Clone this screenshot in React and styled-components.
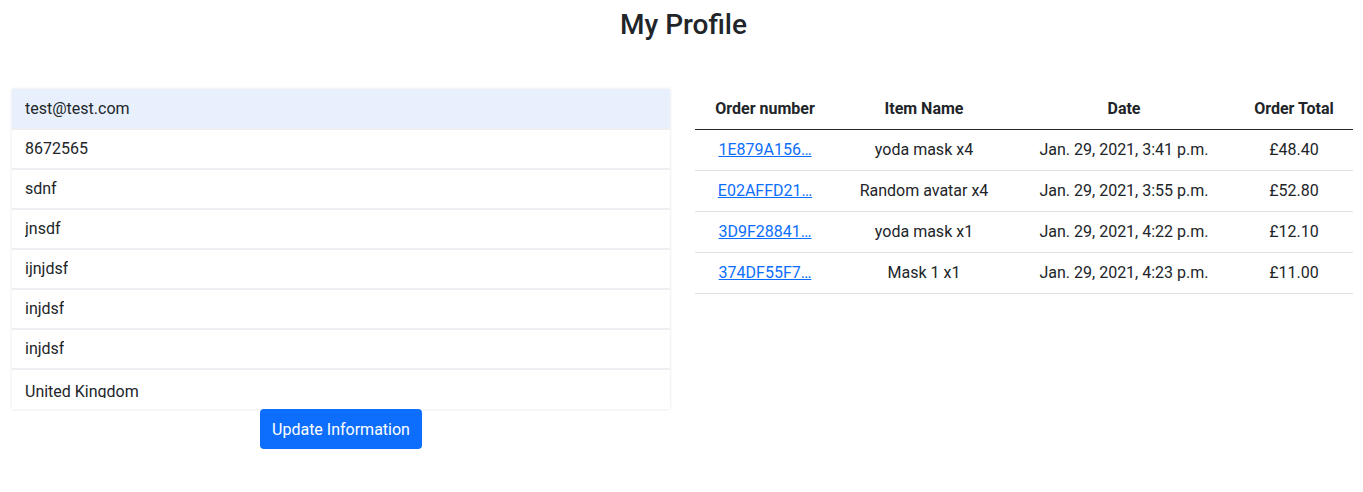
import React from 'react'
import styled, { createGlobalStyle } from 'styled-components'

const GlobalStyle = createGlobalStyle`
  body {
    margin: 0;
    background: #fff;
    color: #212529;
    font-family: Roboto, "Liberation Sans", sans-serif;
    font-size: 16px;
    line-height: 1.5;
  }
`

const Page = styled.div`
  width: 1363px;
`

const Title = styled.h3`
  margin: 0;
  padding: 8px 0 0 4px;
  text-align: center;
  font-size: 28px;
  font-weight: 500;
  line-height: 1.2;
  height: 89px;
  box-sizing: border-box;
`

const Columns = styled.div`
  display: grid;
  grid-template-columns: minmax(0, 1fr) minmax(0, 1fr);
  gap: 25px;
  padding: 0 10px 0 12px;
`

const LeftCol = styled.div`
  display: flex;
  flex-direction: column;
  align-items: center;
`

const Panel = styled.div`
  width: 100%;
  box-shadow: 0 0 3px rgba(0, 0, 0, 0.12);
  background: #fff;
`

const Field = styled.div`
  height: 40px;
  box-sizing: border-box;
  display: flex;
  align-items: ${({ $clipped }) => ($clipped ? 'flex-start' : 'center')};
  padding: ${({ $clipped }) => ($clipped ? '10px 12px 0 13px' : '0 12px 0 13px')};
  border-top: 1px solid #eceef1;
  border-bottom: 1px solid #eceef1;
  background: ${({ $filled }) => ($filled ? '#e8f0fe' : '#fff')};
  &:first-child {
    border-top-color: transparent;
  }
  &:last-child {
    border-bottom-color: transparent;
  }
`

const FieldText = styled.span`
  display: block;
  line-height: 24px;
  height: ${({ $clipped }) => ($clipped ? '18px' : '24px')};
  overflow: hidden;
`

const Button = styled.button`
  height: 40px;
  padding: 0 12px;
  border: none;
  border-radius: 4px;
  background: #0d6efd;
  color: #fff;
  font-family: inherit;
  font-size: 16px;
  cursor: pointer;
`

const Table = styled.table`
  width: 100%;
  border-collapse: collapse;
  table-layout: fixed;
`

const Th = styled.th`
  box-sizing: border-box;
  height: 40px;
  padding: 0 8px;
  font-size: 16px;
  font-weight: 700;
  text-align: center;
  border-bottom: 1px solid #212529;
  width: ${({ $w }) => $w}px;
`

const Td = styled.td`
  box-sizing: border-box;
  height: 41px;
  padding: 0 8px;
  text-align: center;
  border-bottom: 1px solid #dee2e6;
`

const OrderLink = styled.a`
  color: #0d6efd;
  text-decoration: underline;
`

const fields = [
  'test@test.com',
  '8672565',
  'sdnf',
  'jnsdf',
  'ijnjdsf',
  'injdsf',
  'injdsf',
  'United Kingdom',
]

const orders = [
  { id: '1E879A156…', item: 'yoda mask x4', date: 'Jan. 29, 2021, 3:41 p.m.', total: '£48.40' },
  { id: 'E02AFFD21…', item: 'Random avatar x4', date: 'Jan. 29, 2021, 3:55 p.m.', total: '£52.80' },
  { id: '3D9F28841…', item: 'yoda mask x1', date: 'Jan. 29, 2021, 4:22 p.m.', total: '£12.10' },
  { id: '374DF55F7…', item: 'Mask 1 x1', date: 'Jan. 29, 2021, 4:23 p.m.', total: '£11.00' },
]

const App = () => {
  return (
    <Page>
      <GlobalStyle />
      <Title>My Profile</Title>
      <Columns>
        <LeftCol>
          <Panel>
            {fields.map((f, i) => {
              const last = i === fields.length - 1
              return (
                <Field key={i} $filled={i === 0} $clipped={last}>
                  <FieldText $clipped={last}>{f}</FieldText>
                </Field>
              )
            })}
          </Panel>
          <Button>Update Information</Button>
        </LeftCol>
        <div>
          <Table>
            <thead>
              <tr>
                <Th $w={140}>Order number</Th>
                <Th $w={178}>Item Name</Th>
                <Th $w={222}>Date</Th>
                <Th $w={118}>Order Total</Th>
              </tr>
            </thead>
            <tbody>
              {orders.map((o) => (
                <tr key={o.id}>
                  <Td>
                    <OrderLink href="#">{o.id}</OrderLink>
                  </Td>
                  <Td>{o.item}</Td>
                  <Td>{o.date}</Td>
                  <Td>{o.total}</Td>
                </tr>
              ))}
            </tbody>
          </Table>
        </div>
      </Columns>
    </Page>
  )
}

export default App
